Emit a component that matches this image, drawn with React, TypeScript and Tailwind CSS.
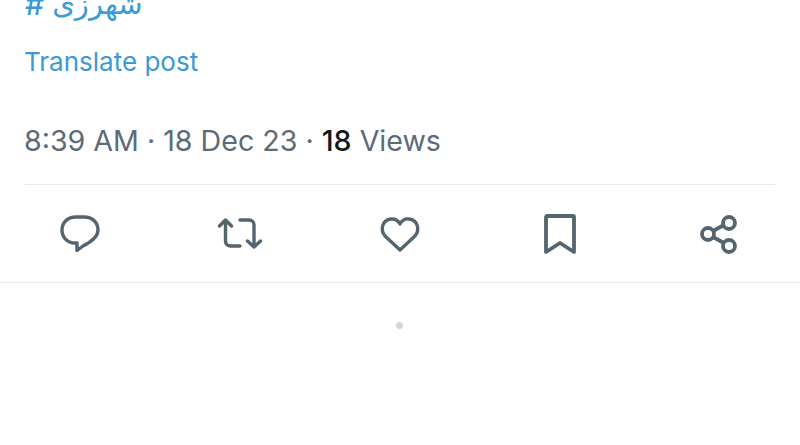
export default function App() {
  return (
    <div className="h-[445px] w-[800px] overflow-hidden bg-white font-['Inter','Noto_Sans',sans-serif]">
      {/* Post text */}
      <div className="px-[25px]">
        <div className="mt-[-12px] flex h-[34px] items-center gap-[8px] text-[#3b99d4]">
          <span className="mb-[3px] text-[30px] font-medium leading-[34px]">#</span>
          <span className="mt-[-2px] font-['DejaVu_Sans',sans-serif] text-[29px] leading-[34px]">شهرزی</span>
        </div>
        <div className="-ml-px mt-[23px] h-[34px] text-[26px] leading-[34px] text-[#3b99d4]">
          Translate post
        </div>
        <div className="-ml-px mt-[43px] h-[38px] text-[28.600px] leading-[38px] text-[#5c6b76]">
          8:39 AM · 18 Dec 23 · <span className="font-medium text-[#14171a]">18</span> Views
        </div>
        <div className="mt-[24px] h-px bg-[#e8eaec]" />
      </div>

      {/* Actions */}
      <div className="grid h-[98px] grid-cols-5 items-center border-b border-[#e3e5e7] text-[#55656f]">
        <div className="flex justify-center">
          <svg width="42" height="42" viewBox="0 0 42 42" fill="none" stroke="currentColor" strokeWidth="3.400" strokeLinejoin="round">
            <path d="M17 4h8c8.500 0 14 5.500 14 13 0 6.500-5 11-15 16l-6 4.500V30h-2C8 30 3 24 3 17 3 9.500 8.500 4 17 4z" />
          </svg>
        </div>
        <div className="flex justify-center">
          <svg width="46" height="42" viewBox="0 0 46 42" fill="none" stroke="currentColor" strokeWidth="3.400" strokeLinecap="round" strokeLinejoin="round">
            <path d="M2.500 13 8.500 7l6 6M8.500 8v20c0 3 2 5 5 5H23M43.500 28 37 34l-6.500-6M37 33V12c0-3-2-5-5-5H23" />
          </svg>
        </div>
        <div className="flex justify-center">
          <svg width="42" height="42" viewBox="0 0 42 42" fill="none" stroke="currentColor" strokeWidth="3.400" strokeLinejoin="round">
            <path d="M21 37 6 23C1 17 3 7 12 6c4-.5 7 1.500 9 5 2-3.500 5-5.500 9-5 9 1 11 11 6 17L21 37z" />
          </svg>
        </div>
        <div className="flex justify-center">
          <svg width="42" height="42" viewBox="0 0 42 42" fill="none" stroke="currentColor" strokeWidth="3.800" strokeLinejoin="round">
            <path d="M7 39V4c0-.5.5-1 1-1h26c.5 0 1 .5 1 1v35L21 30 7 39z" />
          </svg>
        </div>
        <div className="flex justify-center">
          <svg width="42" height="42" viewBox="0 0 42 42" fill="none" stroke="currentColor" strokeWidth="3.800">
            <circle cx="30" cy="10" r="6" />
            <circle cx="9" cy="21" r="6" />
            <circle cx="30" cy="33" r="6" />
            <path d="m14 18 11-6M14 24l11 6" />
          </svg>
        </div>
      </div>

      {/* Loading dot */}
      <div className="flex justify-center pt-[39px]">
        <div className="mr-[2px] h-[7px] w-[7px] rounded-full bg-[#d4d6d8]" />
      </div>
    </div>
  );
}
